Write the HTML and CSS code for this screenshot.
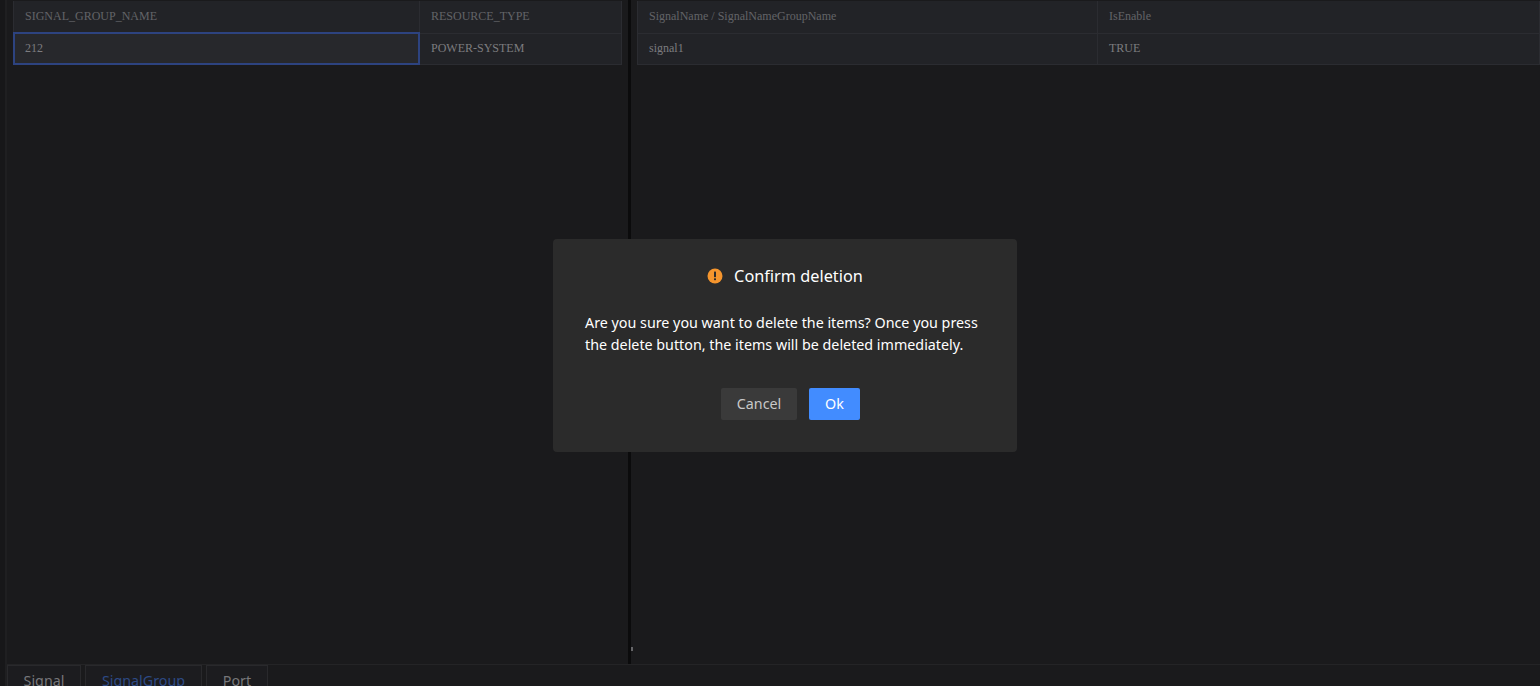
FILE: index.html
```html
<!DOCTYPE html>
<html lang="en">

<head>
    <meta charset="UTF-8">
    <title>Signal Groups</title>
    <link rel="stylesheet" href="styles.css">
</head>

<body>
    <div id="app">
        <div class="rail"></div>
        <div class="content">
            <div class="panes">
                <div class="pane pane-left">
                    <div class="grid grid-left">
                        <div class="cell head">SIGNAL_GROUP_NAME</div>
                        <div class="cell head">RESOURCE_TYPE</div>
                        <div class="cell selected">212</div>
                        <div class="cell">POWER-SYSTEM</div>
                    </div>
                </div>
                <div class="splitter"><span class="grip"></span></div>
                <div class="pane pane-right">
                    <div class="grid grid-right">
                        <div class="cell head">SignalName / SignalNameGroupName</div>
                        <div class="cell head">IsEnable</div>
                        <div class="cell">signal1</div>
                        <div class="cell">TRUE</div>
                    </div>
                </div>
            </div>
            <div class="tabs">
                <div class="tab tab-signal">Signal</div>
                <div class="tab tab-group active">SignalGroup</div>
                <div class="tab tab-port">Port</div>
            </div>
        </div>
    </div>

    <!-- confirm dialog -->
    <div class="overlay">
        <div class="dialog">
            <div class="dialog-title">
                <svg class="warn" width="16" height="16" viewBox="0 0 16 16">
                    <circle cx="8" cy="8" r="7.5" fill="#f5952d" />
                    <rect x="7" y="3.6" width="2" height="5.6" rx="0.6" fill="#2b2b2b" />
                    <rect x="7" y="10.2" width="2" height="2" rx="0.6" fill="#2b2b2b" />
                </svg>
                <span>Confirm deletion</span>
            </div>
            <p class="dialog-text">Are you sure you want to delete the items? Once you press the delete button, the items will be deleted immediately.</p>
            <div class="dialog-actions">
                <button class="btn btn-cancel">Cancel</button>
                <button class="btn btn-ok">Ok</button>
            </div>
        </div>
    </div>
</body>

</html>
```

FILE: styles.css
```css
html,
body {
    height: 100%;
}

body {
    margin: 0;
    background: #1a1a1c;
    overflow: hidden;
}

#app {
    display: flex;
    height: 686px;
}

.rail {
    box-sizing: border-box;
    width: 7px;
    flex: none;
    background: #171719;
    border-right: 2px solid #1f1f21;
}

.content {
    flex: 1;
    min-width: 0;
    display: flex;
    flex-direction: column;
}

.panes {
    display: flex;
    height: 665px;
    flex: none;
    box-sizing: border-box;
    border-bottom: 1px solid #242426;
}

.pane {
    padding: 1px 0 0;
}

.pane-left {
    width: 615px;
    padding-left: 6px;
    box-sizing: border-box;
    flex: none;
}

.pane-right {
    flex: 1;
    min-width: 0;
    padding-left: 6px;
}

.splitter {
    position: relative;
    width: 3px;
    flex: none;
    margin-left: 6px;
    background: #0b0b0c;
}

.grip {
    position: absolute;
    left: 3px;
    top: 647px;
    width: 2px;
    height: 4px;
    background: #666669;
}

.grid {
    display: grid;
    grid-template-rows: 33px 30px;
    border: 1px solid #2b2c31;
    border-width: 0 1px 1px 1px;
    background: #222327;
    font-family: "Liberation Serif", serif;
    font-size: 12px;
    color: #7c7c7f;
}

.grid-left {
    grid-template-columns: 406px 202px;
}

.grid-right {
    grid-template-columns: 460px 1fr;
    border-right: 0;
}

.cell {
    box-sizing: border-box;
    display: flex;
    align-items: center;
    padding-left: 11px;
    border-right: 1px solid #2b2c31;
}

.cell:nth-last-child(n+3) {
    border-bottom: 1px solid #2b2c31;
    padding-bottom: 1px;
}

.cell:nth-last-child(-n+2) {
    padding-bottom: 2px;
}

.head {
    color: #636367;
}

.cell.selected {
    margin: -2px 0 -1px -1px;
    border: 2px solid #2d4380;
    background: #27282c;
    padding: 0 0 0 10px;
}

.tabs {
    display: flex;
    gap: 4px;
    height: 21px;
    box-sizing: border-box;
    overflow: hidden;
    font-family: "Noto Sans", sans-serif;
    font-size: 14.3px;
    color: #77777a;
}

.tab {
    box-sizing: border-box;
    height: 32px;
    padding-top: 5px;
    text-align: center;
    background: #1c1c1f;
    border: 1px solid #29292c;
}

.tab-signal {
    width: 74px;
}

.tab-group {
    width: 117px;
}

.tab-port {
    width: 62px;
}

.active {
    color: #2d4a86;
}

.overlay {
    position: absolute;
    left: 553px;
    top: 239px;
}

.dialog {
    box-sizing: border-box;
    width: 464px;
    height: 213px;
    padding: 24px 32px;
    background: #2b2b2b;
    border-radius: 4px;
    font-family: "Noto Sans", sans-serif;
    color: #fff;
}

.dialog-title {
    display: flex;
    justify-content: center;
    align-items: center;
    gap: 11px;
    height: 26px;
    font-size: 16.3px;
}

.warn {
    flex: none;
}

.dialog-text {
    margin: 23px 0 0;
    font-size: 14.3px;
    line-height: 22px;
}

.dialog-actions {
    display: flex;
    justify-content: center;
    gap: 12px;
    margin-top: 32px;
    padding-left: 11px;
}

.btn {
    height: 32px;
    border: 0;
    border-radius: 2px;
    font-family: inherit;
    font-size: 14.3px;
    padding: 0 0 2px;
}

.btn-cancel {
    width: 76px;
    background: #3a3a3a;
    color: #c8c8c8;
}

.btn-ok {
    width: 51px;
    background: #428cff;
    color: #fff;
}
```
